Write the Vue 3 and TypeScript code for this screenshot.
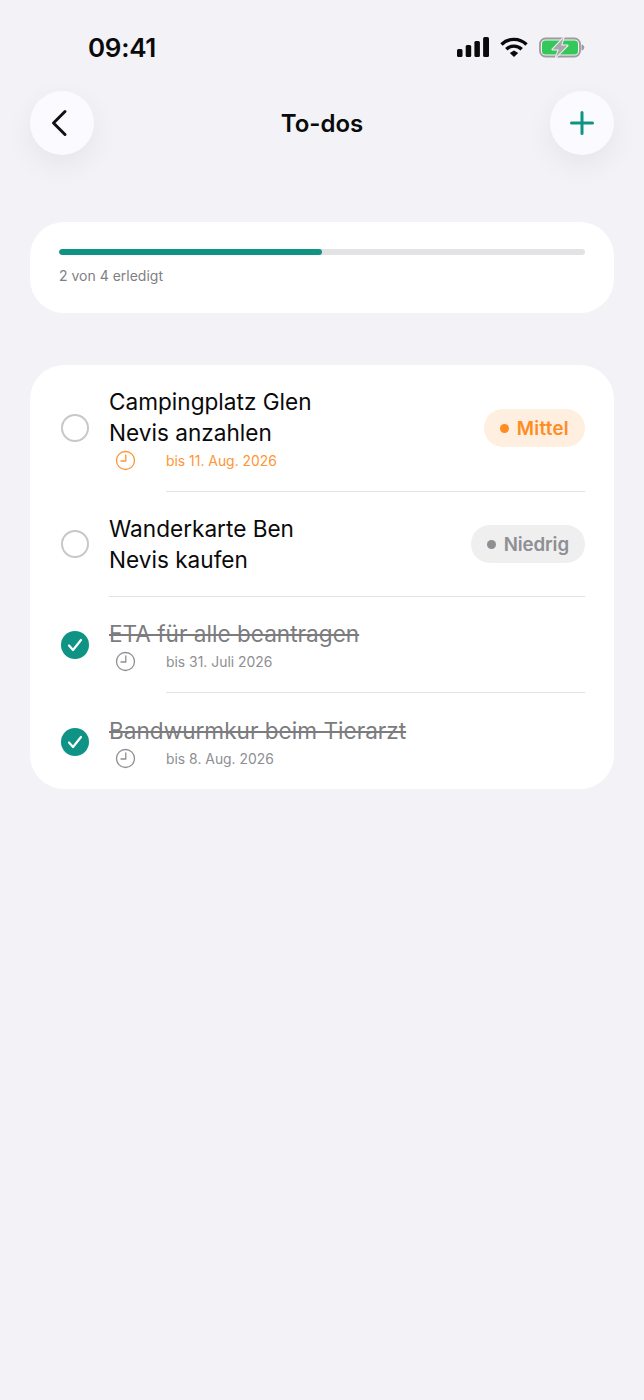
<template>
  <div class="screen">
    <div class="status-bar">
      <span class="time">09:41</span>
      <div class="status-icons">
        <svg width="32" height="20" viewBox="0 0 32 20">
          <rect x="0" y="12" width="5.500" height="8" rx="1.500" fill="#0a0a0a" />
          <rect x="8.700" y="8" width="5.500" height="12" rx="1.500" fill="#0a0a0a" />
          <rect x="17.400" y="4" width="5.500" height="16" rx="1.500" fill="#0a0a0a" />
          <rect x="26.100" y="0" width="5.900" height="20" rx="1.500" fill="#0a0a0a" />
        </svg>
        <svg width="28" height="20" viewBox="0 0 28 20">
          <path d="M1.500 7.500a17.800 17.800 0 0 1 25 0" fill="none" stroke="#0a0a0a" stroke-width="3.400" />
          <path d="M6.300 12.300a11 11 0 0 1 15.400 0" fill="none" stroke="#0a0a0a" stroke-width="3.400" />
          <path d="M9.800 16 14 13.400l4.200 2.600L14 20z" fill="#0a0a0a" />
        </svg>
        <svg width="46" height="21" viewBox="0 0 46 21">
          <rect x="1" y="1.500" width="40" height="18" rx="5.500" fill="none" stroke="#9c9c9e" stroke-width="1.800" />
          <rect x="3" y="3.500" width="36" height="14" rx="3.500" fill="#34c759" />
          <path d="M42.500 7.500v6c1.500-.3 2.800-1.400 2.800-3s-1.300-2.700-2.800-3z" fill="#9c9c9e" />
          <path d="M24.500 1 13.500 12.500h6.300L17 20l11.500-11.500h-6.300z" fill="#a9a9ab" stroke="#f2f2f7" stroke-width="2" stroke-linejoin="round" paint-order="stroke" />
        </svg>
      </div>
    </div>

    <header class="nav">
      <button class="round-btn" type="button" aria-label="Zurück">
        <svg class="back-icon" width="24" height="30" viewBox="0 0 24 30">
          <path d="M17 3.500 5.500 15 17 26.500" fill="none" stroke="#111" stroke-width="3" stroke-linecap="round" stroke-linejoin="round" />
        </svg>
      </button>
      <h1 class="title">To-dos</h1>
      <button class="round-btn" type="button" aria-label="Hinzufügen">
        <svg width="28" height="28" viewBox="0 0 28 28">
          <path d="M14 3.500v21M3.500 14h21" fill="none" stroke="#0f9384" stroke-width="3" stroke-linecap="round" />
        </svg>
      </button>
    </header>

    <section class="card progress-card">
      <div class="track">
        <div class="fill" :style="{ width: progress + '%' }"></div>
      </div>
      <p class="progress-label">{{ doneCount }} von {{ todos.length }} erledigt</p>
    </section>

    <section class="card list-card">
      <template v-for="(todo, index) in todos" :key="todo.title">
        <div class="row">
          <span class="check" :class="{ done: todo.done }">
            <svg v-if="todo.done" width="16" height="14" viewBox="0 0 16 14">
              <path d="M2 7.500 6 12l8-10" fill="none" stroke="#fff" stroke-width="2.200" stroke-linecap="round" stroke-linejoin="round" />
            </svg>
          </span>
          <div class="row-body">
            <div class="row-title" :class="{ struck: todo.done }">{{ todo.title }}</div>
            <div v-if="todo.due" class="due" :class="{ late: !todo.done }">
              <svg class="clock" width="21" height="21" viewBox="0 0 21 21">
                <circle cx="10.500" cy="10.500" r="9" fill="none" stroke="currentColor" stroke-width="1.300" />
                <path d="M10.800 5v6H6" fill="none" stroke="currentColor" stroke-width="1.300" stroke-linecap="round" stroke-linejoin="round" />
              </svg>
              <span>{{ todo.due }}</span>
            </div>
          </div>
          <span v-if="todo.priority" class="badge" :class="todo.priority.kind">
            <i class="dot"></i>{{ todo.priority.label }}
          </span>
        </div>
        <div v-if="index < todos.length - 1" class="divider" :class="{ short: todo.due }"></div>
      </template>
    </section>
  </div>
</template>

<script setup lang="ts">
import { computed } from 'vue'

interface Todo {
  title: string
  due?: string
  done: boolean
  priority?: { label: string; kind: 'medium' | 'low' }
}

const todos: Todo[] = [
  { title: 'Campingplatz Glen Nevis anzahlen', due: 'bis 11. Aug. 2026', done: false, priority: { label: 'Mittel', kind: 'medium' } },
  { title: 'Wanderkarte Ben Nevis kaufen', done: false, priority: { label: 'Niedrig', kind: 'low' } },
  { title: 'ETA für alle beantragen', due: 'bis 31. Juli 2026', done: true },
  { title: 'Bandwurmkur beim Tierarzt', due: 'bis 8. Aug. 2026', done: true },
]

const doneCount = computed(() => todos.filter((t) => t.done).length)
const progress = computed(() => (doneCount.value / todos.length) * 100)
</script>

<style>
html,
body {
  margin: 0;
  background: #f2f2f7;
}
</style>

<style scoped>
.screen {
  height: 1400px;
  box-sizing: border-box;
  padding: 0 30px;
  background: #f2f2f7;
  font-family: Inter, "Liberation Sans", sans-serif;
  color: #0a0a0a;
  overflow: hidden;
}

.status-bar {
  height: 91px;
  display: flex;
  justify-content: space-between;
  align-items: flex-start;
  padding: 32px 29px 0 58px;
  box-sizing: border-box;
}

.time {
  font-size: 26px;
  line-height: 31px;
  font-weight: 600;
  letter-spacing: -0.3px;
}

.status-icons {
  display: flex;
  align-items: center;
  gap: 11px;
  height: 30px;
}

.nav {
  display: flex;
  justify-content: space-between;
  align-items: center;
  height: 64px;
}

.round-btn {
  width: 64px;
  height: 64px;
  padding: 0;
  border: none;
  border-radius: 50%;
  background: #fbfaff;
  box-shadow: 0 10px 30px rgba(0, 0, 0, 0.06);
  display: flex;
  align-items: center;
  justify-content: center;
}

.back-icon {
  margin-left: -4px;
}

.title {
  margin: 0;
  font-size: 24px;
  font-weight: 600;
}

.card {
  background: #fff;
  border-radius: 34px;
}

.progress-card {
  margin-top: 67px;
  height: 91px;
  box-sizing: border-box;
  padding: 27px 29px 0;
}

.track {
  height: 6px;
  border-radius: 3px;
  background: #e3e3e5;
  overflow: hidden;
}

.fill {
  height: 100%;
  border-radius: 3px;
  background: #0f9384;
}

.progress-label {
  margin: 12px 0 0;
  font-size: 14px;
  line-height: 18px;
  color: #7f7f83;
}

.list-card {
  margin-top: 52px;
  padding: 0 29px 0 31px;
}

.row {
  display: flex;
  align-items: center;
  padding: 21px 0;
}

.row:last-child {
  padding-top: 22px;
}

.check {
  flex: none;
  width: 28px;
  height: 28px;
  box-sizing: border-box;
  border: 2.5px solid #c7c7cc;
  border-radius: 50%;
  margin-right: 20px;
  display: flex;
  align-items: center;
  justify-content: center;
}

.check.done {
  border: none;
  background: #0f9384;
}

.row-body {
  flex: 1;
  min-width: 0;
}

.row-title {
  font-size: 22.600px;
  line-height: 31px;
  max-width: 240px;
}

.row-title.struck {
  color: #7c7c80;
  text-decoration: line-through;
  max-width: none;
}

.due {
  display: flex;
  align-items: center;
  height: 21px;
  margin-top: 2px;
  margin-bottom: -1px;
  font-size: 13.900px;
  color: #8e8e93;
}

.due.late {
  color: #ff9534;
}

.clock {
  margin-left: 6px;
  margin-right: 30px;
}

.divider {
  height: 1px;
  margin-left: 48px;
  background: #e3e3e5;
}

.divider.short {
  margin-left: 105px;
}

.badge {
  flex: none;
  height: 38px;
  border-radius: 19px;
  box-sizing: border-box;
  padding: 0 16px;
  display: flex;
  align-items: center;
  gap: 8px;
  font-size: 18.700px;
  font-weight: 600;
}

.badge .dot {
  width: 9px;
  height: 9px;
  border-radius: 50%;
  background: currentColor;
}

.badge.medium {
  color: #ff8c1f;
  background: #ffefe0;
  letter-spacing: 0.3px;
}

.badge.low {
  color: #8e8e93;
  background: #efeff0;
  letter-spacing: -0.1px;
}
</style>
